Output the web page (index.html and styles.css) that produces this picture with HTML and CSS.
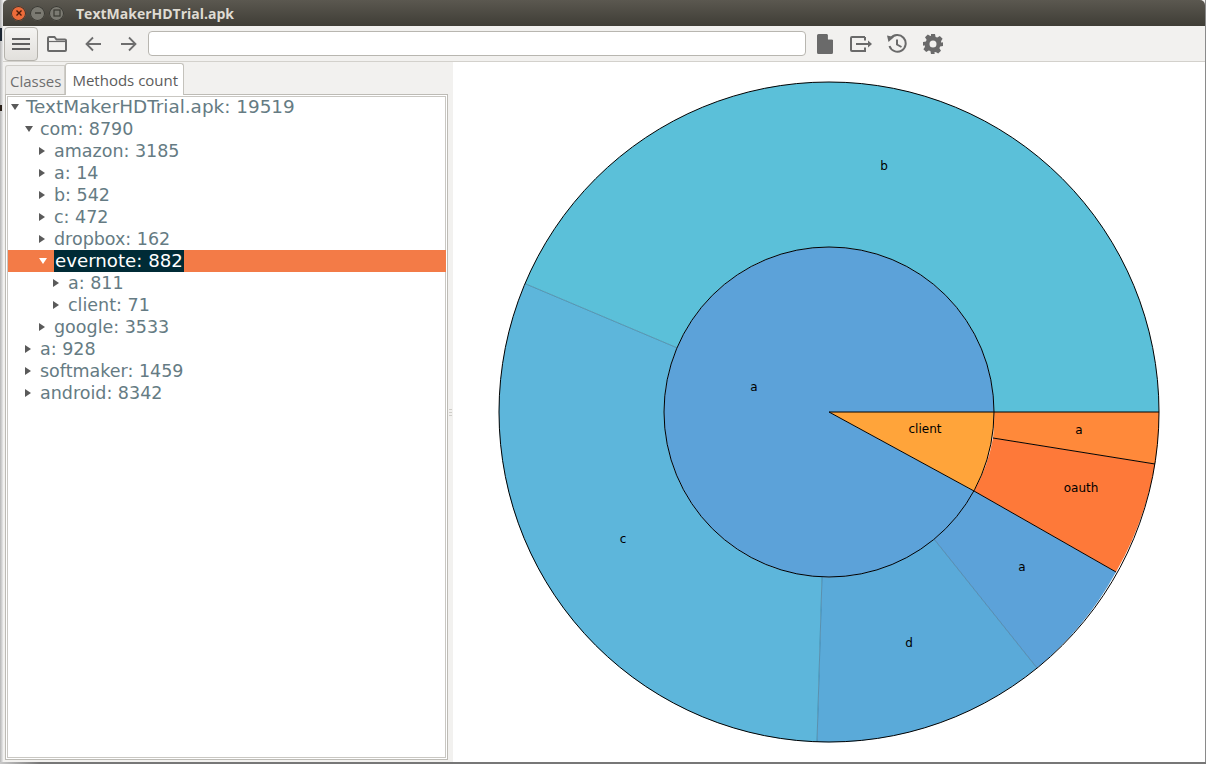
FILE: index.html
```html
<!DOCTYPE html>
<html lang="en">
<head>
<meta charset="utf-8">
<title>TextMakerHDTrial.apk</title>
<link rel="stylesheet" href="styles.css">
</head>
<body>
<div class="desktop">
<div class="window">
  <header class="titlebar">
    <div class="wm-buttons">
      <span class="wm wm-close"><svg viewBox="0 0 8 8" width="8" height="8"><path d="M1.500 1.500l5 5M6.500 1.500l-5 5" stroke="#4a1a08" stroke-width="1.400"/></svg></span>
      <span class="wm wm-min"><svg viewBox="0 0 8 8" width="8" height="8"><path d="M1 4h6" stroke="#3a3933" stroke-width="1.400"/></svg></span>
      <span class="wm wm-max"><svg viewBox="0 0 8 8" width="8" height="8"><rect x="1" y="1" width="6" height="6" fill="none" stroke="#3a3933" stroke-width="1.200"/></svg></span>
    </div>
    <span class="title">TextMakerHDTrial.apk</span>
  </header>
  <div class="toolbar">
    <button class="tool tool-menu"><svg viewBox="0 0 18 14" width="18" height="14"><path d="M0 2h18M0 7h18M0 12h18" stroke="#5e5e5e" stroke-width="1.800"/></svg></button>
    <span class="tool tool-folder"><svg viewBox="0 0 20 16" width="20" height="16"><path d="M2 1h5.500l2 2.500H18a1 1 0 0 1 1 1V14a1 1 0 0 1-1 1H2a1 1 0 0 1-1-1V2a1 1 0 0 1 1-1z" fill="none" stroke="#6a6a6a" stroke-width="2"/><path d="M2 5.500h16" stroke="#6a6a6a" stroke-width="1.200"/></svg></span>
    <span class="tool tool-back"><svg viewBox="0 0 16 16" width="16" height="16"><path d="M16 8H2M8 1.500L1.500 8 8 14.500" fill="none" stroke="#6e6e6e" stroke-width="1.800"/></svg></span>
    <span class="tool tool-fwd"><svg viewBox="0 0 16 16" width="16" height="16"><path d="M0 8h14M8 1.500L14.500 8 8 14.500" fill="none" stroke="#6e6e6e" stroke-width="1.800"/></svg></span>
    <div class="address"></div>
    <span class="tool tool-file"><svg viewBox="0 0 16 20" width="16" height="20"><path d="M1.500 0H10l6 6v12.500a1.500 1.500 0 0 1-1.500 1.500h-13A1.500 1.500 0 0 1 0 18.500v-17A1.500 1.500 0 0 1 1.500 0z" fill="#6a6a6a"/><path d="M10.800 0v5.200H16V0z" fill="#f2f1ef"/><path d="M10.500 0.500L15.500 5.500H10.500z" fill="#6a6a6a"/><path d="M11 0l5 5v.5h-5z" fill="#f2f1ef"/></svg></span>
    <span class="tool tool-export"><svg viewBox="0 0 22 16" width="22" height="16"><path d="M15 1H2a1 1 0 0 0-1 1v12a1 1 0 0 0 1 1h13V11.500M15 1v3.500" fill="none" stroke="#6a6a6a" stroke-width="2"/><path d="M6 8h13" stroke="#6a6a6a" stroke-width="2"/><path d="M18 4.500L22 8l-4 3.500z" fill="#6a6a6a"/></svg></span>
    <span class="tool tool-history"><svg viewBox="0 0 20 20" width="20" height="20"><path d="M3.600 4.600A8.300 8.300 0 1 1 2.500 12" fill="none" stroke="#6a6a6a" stroke-width="2"/><path d="M0 1.500l7 1.500L1.500 8z" fill="#6a6a6a"/><path d="M10 5.500v5l4.500 2.500" fill="none" stroke="#6a6a6a" stroke-width="2"/></svg></span>
    <span class="tool tool-gear"><svg viewBox="0 0 20 20" width="20" height="20"><path fill-rule="evenodd" fill="#6a6a6a" d="M8 0h4l.6 2.900 1.700.7 2.500-1.600 2.800 2.800-1.600 2.500.7 1.700L20 8v4l-2.900.6-.7 1.700 1.600 2.500-2.800 2.800-2.500-1.600-1.700.7L12 20H8l-.6-2.900-1.700-.7-2.500 1.600L.4 15.200 2 12.700l-.7-1.700L0 12V8l2.900-.6.700-1.700L2 3.200 4.800.4 7.300 2l.7-.3zM10 6.500a3.500 3.500 0 1 0 0 7 3.500 3.500 0 0 0 0-7z"/></svg></span>
  </div>
  <main class="content">
    <section class="side">
      <div class="tabs">
        <span class="tab">Classes</span>
        <span class="tab tab-active">Methods count</span>
      </div>
      <div class="tree-frame">
        <ul class="tree">
          <li class="row lv0"><i class="arrow open"></i><span class="label">TextMakerHDTrial.apk: 19519</span></li>
          <li class="row lv1"><i class="arrow open"></i><span class="label">com: 8790</span></li>
          <li class="row lv2"><i class="arrow"></i><span class="label">amazon: 3185</span></li>
          <li class="row lv2"><i class="arrow"></i><span class="label">a: 14</span></li>
          <li class="row lv2"><i class="arrow"></i><span class="label">b: 542</span></li>
          <li class="row lv2"><i class="arrow"></i><span class="label">c: 472</span></li>
          <li class="row lv2"><i class="arrow"></i><span class="label">dropbox: 162</span></li>
          <li class="row lv2 selected"><i class="arrow open"></i><span class="label">evernote: 882</span></li>
          <li class="row lv3"><i class="arrow"></i><span class="label">a: 811</span></li>
          <li class="row lv3"><i class="arrow"></i><span class="label">client: 71</span></li>
          <li class="row lv2"><i class="arrow"></i><span class="label">google: 3533</span></li>
          <li class="row lv1"><i class="arrow"></i><span class="label">a: 928</span></li>
          <li class="row lv1"><i class="arrow"></i><span class="label">softmaker: 1459</span></li>
          <li class="row lv1"><i class="arrow"></i><span class="label">android: 8342</span></li>
        </ul>
      </div>
    </section>
    <div class="splitter"><span class="grip"></span></div>
    <section class="chart">
      <svg class="sunburst" viewBox="0 0 752 700" width="752" height="700">
        <g transform="translate(376 350)" stroke="#000" stroke-width="1" stroke-linejoin="round">
          <path fill="#5bc0d9" stroke="none" d="M165 0H330A330 330 0 0 0 -304 -128.400L-152 -64.200A165 165 0 0 1 165 0Z"/>
          <path fill="#5db6db" stroke="none" d="M-304 -128.400A330 330 0 0 0 -12 330L-7 165A165 165 0 0 1 -152 -64.200Z"/>
          <path fill="#5aaad9" stroke="none" d="M-12 330A330 330 0 0 0 208 256L105 127A165 165 0 0 1 -7 165Z"/>
          <path fill="#5ca2d9" stroke="none" d="M208 256A330 330 0 0 0 287 160L145 79A165 165 0 0 1 105 127Z"/>
          <path fill="#fe7939" stroke="none" d="M287 160A330 330 0 0 0 326 52L164 26A165 165 0 0 1 145 79Z"/>
          <path fill="#ff893a" stroke="none" d="M326 52A330 330 0 0 0 330 0H165A165 165 0 0 1 164 26Z"/>
          <path class="seam" d="M-304 -128.400L-152 -64.200M-12 330L-7 165M208 256L105 127"/>
          <path fill="none" d="M164 26L326 52M145 79L287 160"/>
          <path fill="#5ca2d9" stroke="none" d="M0 0L145 79A165 165 0 0 1 -165 0A165 165 0 0 1 165 0Z"/>
          <path fill="#ffa43a" stroke="none" d="M0 0H165A165 165 0 0 1 145 79Z"/>
          <circle r="165" fill="none"/>
          <circle r="330" fill="none"/>
          <path fill="none" d="M0 0H330M0 0L145 79"/>
        </g>
        <g class="chart-labels">
          <text x="431" y="108">b</text>
          <text x="301" y="329">a</text>
          <text x="472" y="371">client</text>
          <text x="626" y="372">a</text>
          <text x="628" y="430">oauth</text>
          <text x="569" y="509">a</text>
          <text x="456" y="585">d</text>
          <text x="170" y="481">c</text>
        </g>
      </svg>
    </section>
  </main>
</div>
</div>
</body>
</html>
```
FILE: styles.css
```css
* { box-sizing: border-box; }
html, body { margin: 0; height: 100%; overflow: hidden; background: #fff; }
.desktop { width: 1206px; height: 764px; padding: 0 1px 2px 3px; background:
  linear-gradient(#1d2733, #1d2733) 0 28px / 2px 13px no-repeat,
  linear-gradient(#2a2018, #2a2018) 0 105px / 2px 6px no-repeat,
  linear-gradient(90deg, #b4b4b4, #e8e8e8 3px, #e8e8e8 1205px, #8a8a8a 1205px) 0 0 / 100% 762px no-repeat,
  linear-gradient(90deg, #c8c8c8, #777 40px) 0 762px / 100% 2px no-repeat; }
.window { height: 100%; display: flex; flex-direction: column; background: #f2f1ef; }
.titlebar { height: 26px; flex: none; display: flex; align-items: center; padding-left: 8px; background: linear-gradient(#5b5850, #3f3d36); border-radius: 5px 5px 0 0; }
.wm-buttons { display: flex; gap: 4px; }
.wm { width: 15px; height: 15px; border-radius: 50%; display: flex; align-items: center; justify-content: center; background: #7b7a72; box-shadow: inset 0 0 0 1px #3a3933; }
.wm-close { background: #ec6b3a; }
.title { margin-left: 12px; font: bold 14px "Open Sans", "Noto Sans", sans-serif; color: #dfdbd2; }
.toolbar { height: 36px; flex: none; display: flex; align-items: center; padding-left: 1px; background: #f2f1ef; border-bottom: 1px solid #d3d1cc; }
.tool { display: flex; align-items: center; justify-content: center; flex: none; }
.tool-menu { width: 34px; height: 34px; margin: 0; padding: 0; border: 1px solid #b5b3ad; border-radius: 4px; background: linear-gradient(#f4f3f1, #e2e0dc); }
.tool-folder { width: 20px; margin-left: 9px; }
.tool-back { width: 16px; margin-left: 18px; }
.tool-fwd { width: 16px; margin-left: 20px; }
.address { flex: none; width: 658px; height: 25px; margin-left: 11px; background: #fff; border: 1px solid #b8b6b0; border-radius: 4px; }
.tool-file { width: 16px; margin-left: 11px; }
.tool-export { width: 22px; margin-left: 17px; }
.tool-history { width: 20px; margin-left: 15px; }
.tool-gear { width: 20px; margin-left: 16px; }
.content { flex: 1; min-height: 0; display: flex; }
.side { width: 445px; flex: none; padding-left: 2px; display: flex; flex-direction: column; }
.tabs { height: 32px; flex: none; display: flex; align-items: flex-end; }
.tab { height: 29px; padding: 6px 3px 0 4px; font: 15px/18px "Open Sans", "Noto Sans", sans-serif; color: #6f6f6f; background: #eeedeb; border: 1px solid #cfcdc8; border-bottom: 0; border-radius: 3px 0 0 0; }
.tab-active { height: 32px; margin-bottom: -1px; padding: 7px 5px 0 6px; color: #5c5c5c; background: #fff; border-color: #c4c2bc; border-radius: 3px 3px 0 0; position: relative; z-index: 1; }
.tree-frame { flex: 1; margin: 0 0 2px 0; padding: 1px 0 0; background: #fff; border: 1px solid #bdbbb5; box-shadow: inset 0 0 0 1px #fff, inset 0 0 0 2px #c9c7c2; }
.tree { list-style: none; margin: 0; padding: 0 1px 0 2px; }
.row { height: 22px; display: flex; align-items: center; font: 17.500px/22px "DejaVu Sans", sans-serif; color: #657b83; position: relative; }
.lv0 { padding-left: 3px; font-size: 18.400px; }
.lv1 { padding-left: 17px; }
.lv2 { padding-left: 31px; }
.lv3 { padding-left: 45px; }
.arrow { width: 0; height: 0; flex: none; margin-right: 9px; border-style: solid; border-width: 4px 0 4px 6px; border-color: transparent transparent transparent #5a5a5a; }
.arrow.open { margin-right: 7px; border-width: 6px 4px 0 4px; border-color: #5a5a5a transparent transparent transparent; }
.selected { background: #f37b47; color: #fff; }
.selected .arrow.open { border-top-color: #fff; }
.selected .label { background: #002b36; padding: 0 1px; height: 22px; line-height: 22px; font-size: 18.200px; }
.splitter { width: 5px; flex: none; display: flex; align-items: center; justify-content: center; background: #f2f1ef; }
.grip { width: 3px; height: 7px; background: repeating-linear-gradient(#cfcdc8 0 1px, transparent 1px 3px); }
.chart { flex: 1; min-width: 0; background: #fff; }
.sunburst { display: block; }
.seam { fill: none; stroke: #2f5f78; stroke-width: 0.500; }
.chart-labels text { font: 12px "DejaVu Sans", sans-serif; fill: #000; text-anchor: middle; }
```
